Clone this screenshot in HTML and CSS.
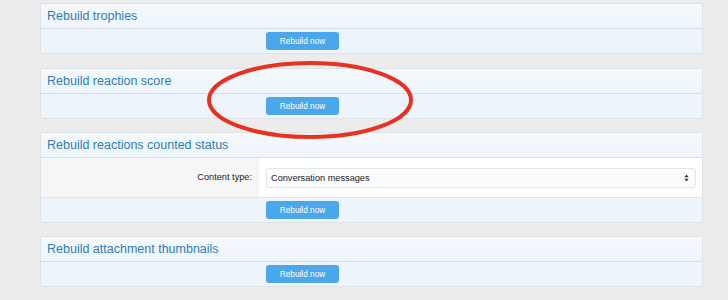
FILE: index.html
```html
<!DOCTYPE html>
<html lang="en">
<head>
    <meta charset="UTF-8">
    <meta name="viewport" content="width=device-width, initial-scale=1.0">
    <title>Rebuild caches</title>
    <link rel="stylesheet" href="styles.css">
</head>
<body>
    <div id="page">
        <div class="block">
            <h2 class="block-header">Rebuild trophies</h2>
            <div class="block-footer">
                <button class="button">Rebuild now</button>
            </div>
        </div>

        <div class="block">
            <h2 class="block-header">Rebuild reaction score</h2>
            <div class="block-footer">
                <button class="button">Rebuild now</button>
            </div>
        </div>

        <div class="block">
            <h2 class="block-header">Rebuild reactions counted status</h2>
            <div class="form-row">
                <label class="form-label" for="content-type">Content type:</label>
                <div class="form-input">
                    <div class="select">
                        <span id="content-type">Conversation messages</span>
                        <svg class="select-arrows" width="5" height="8" viewBox="0 0 5 8">
                            <path d="M2.5 0.5 L4.6 3.2 L0.4 3.2 Z M2.5 7.5 L4.6 4.8 L0.4 4.8 Z" fill="#333"/>
                        </svg>
                    </div>
                </div>
            </div>
            <div class="block-footer">
                <button class="button">Rebuild now</button>
            </div>
        </div>

        <div class="block">
            <h2 class="block-header">Rebuild attachment thumbnails</h2>
            <div class="block-footer">
                <button class="button">Rebuild now</button>
            </div>
        </div>

        <!-- red marker drawn over the second block -->
        <svg class="marker" width="220" height="90" viewBox="0 0 220 90">
            <ellipse cx="110" cy="44" rx="101" ry="37" fill="none" stroke="#e8321f" stroke-width="4"/>
        </svg>
    </div>
</body>
</html>
```

FILE: styles.css
```css
body {
    margin: 0;
    background-color: #ececec;
    font-family: "Liberation Sans", Arial, sans-serif;
}
#page {
    position: relative;
    padding: 3px 25px 0 40px;
}
.block {
    background-color: #edf4fb;
    border: 1px solid #dde2e7;
    border-radius: 2px;
    margin-bottom: 13px;
}
.block:first-child {
    margin-bottom: 14px;
}
.block-header {
    margin: 0;
    height: 24px;
    line-height: 24px;
    padding: 0 6px;
    font-size: 12.5px;
    font-weight: normal;
    color: #2e7cb7;
    background: linear-gradient(#f5f9fd, #eef5fc);
    border-bottom: 1px solid #d6dde4;
}
.block-footer {
    height: 24px;
    padding-left: 225px;
    box-sizing: border-box;
    padding-top: 3px;
}
.button {
    display: block;
    width: 73px;
    height: 18px;
    padding: 0;
    border: none;
    border-radius: 3px;
    background-color: #4aa7ea;
    color: #fff;
    font-family: "Liberation Sans", Arial, sans-serif;
    font-size: 8.3px;
}
.form-row {
    display: flex;
    height: 39px;
    border-bottom: 1px solid #dfe4e9;
}
.form-label {
    width: 218px;
    padding-right: 7px;
    box-sizing: border-box;
    background-color: #f6f6f6;
    text-align: right;
    font-size: 9.2px;
    color: #222;
    line-height: 39px;
}
.form-input {
    flex: 1;
    background-color: #fff;
    padding: 10px 6px 0 7px;
}
.select {
    display: flex;
    align-items: center;
    justify-content: space-between;
    height: 20px;
    box-sizing: border-box;
    padding: 0 6px 0 4px;
    border: 1px solid #e1e6eb;
    border-radius: 3px;
    background-color: #fbfcfe;
    font-size: 9.2px;
    color: #222;
}
.marker {
    position: absolute;
    left: 200px;
    top: 56px;
}
```
